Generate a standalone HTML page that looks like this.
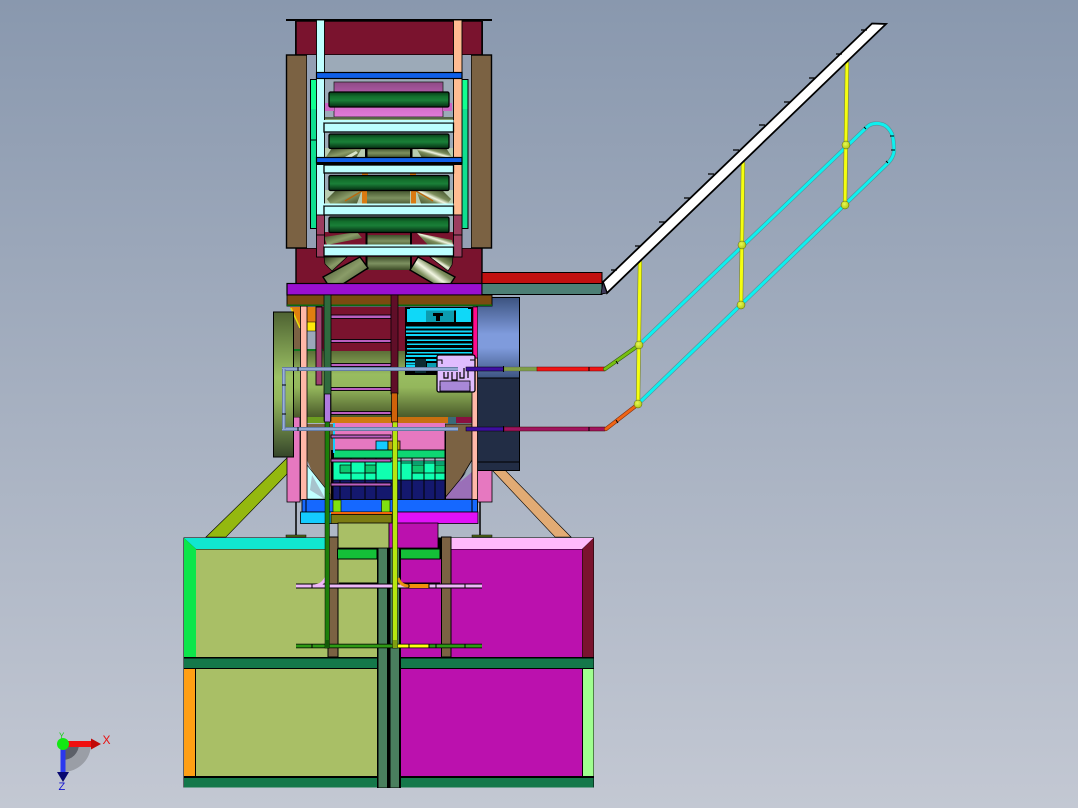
<!DOCTYPE html>
<html><head><meta charset="utf-8"><style>html,body{margin:0;padding:0;width:1078px;height:808px;overflow:hidden;background:#a0aaba}svg{display:block}</style></head><body>
<svg xmlns="http://www.w3.org/2000/svg" width="1078" height="808" viewBox="0 0 1078 808">
<defs>
<linearGradient id="bg" x1="0" y1="0" x2="0" y2="1"><stop offset="0" stop-color="#8998ae"/><stop offset="1" stop-color="#c3c8d3"/></linearGradient>
<linearGradient id="dg" x1="0" y1="0" x2="0" y2="1"><stop offset="0" stop-color="#083a18"/><stop offset=".3" stop-color="#13702d"/><stop offset=".55" stop-color="#1a7f38"/><stop offset="1" stop-color="#052d12"/></linearGradient>
<linearGradient id="pk" x1="0" y1="0" x2="0" y2="1"><stop offset="0" stop-color="#8e4a85"/><stop offset=".6" stop-color="#cc66c4"/><stop offset="1" stop-color="#e07cd8"/></linearGradient>
<linearGradient id="ol" x1="0" y1="0" x2="0" y2="1"><stop offset="0" stop-color="#3f4f2a"/><stop offset=".5" stop-color="#7d9160"/><stop offset="1" stop-color="#3c4a26"/></linearGradient>
<linearGradient id="ang1" x1="0" y1="0" x2="1" y2="1"><stop offset="0" stop-color="#2f3d1c"/><stop offset=".5" stop-color="#8a9c68"/><stop offset="1" stop-color="#2f3d1c"/></linearGradient>
<linearGradient id="ang2" x1="1" y1="0" x2="0" y2="1"><stop offset="0" stop-color="#2f3d1c"/><stop offset=".38" stop-color="#7c8e5c"/><stop offset=".5" stop-color="#f2f6e2"/><stop offset=".62" stop-color="#7c8e5c"/><stop offset="1" stop-color="#2f3d1c"/></linearGradient>
<linearGradient id="cyl" x1="0" y1="0" x2="0" y2="1"><stop offset="0" stop-color="#5c6e38"/><stop offset=".35" stop-color="#98bc60"/><stop offset=".55" stop-color="#94b75c"/><stop offset="1" stop-color="#4a5a2a"/></linearGradient>
<linearGradient id="disc" x1="0" y1="0" x2="0" y2="1"><stop offset="0" stop-color="#4e6232"/><stop offset=".45" stop-color="#9cc264"/><stop offset=".6" stop-color="#94b75c"/><stop offset="1" stop-color="#35452a"/></linearGradient>
<linearGradient id="blue" x1="0" y1="0" x2="0" y2="1"><stop offset="0" stop-color="#3c5380"/><stop offset=".45" stop-color="#7f9bdc"/><stop offset=".62" stop-color="#7f9bdc"/><stop offset="1" stop-color="#3c5380"/></linearGradient>
<linearGradient id="pipe" x1="0" y1="0" x2="0" y2="1"><stop offset="0" stop-color="#4f688f"/><stop offset=".5" stop-color="#a8bce8"/><stop offset="1" stop-color="#4f688f"/></linearGradient>
<linearGradient id="pipev" x1="0" y1="0" x2="1" y2="0"><stop offset="0" stop-color="#4f688f"/><stop offset=".5" stop-color="#a8bce8"/><stop offset="1" stop-color="#4f688f"/></linearGradient>
<radialGradient id="ball" cx=".42" cy=".38" r=".7"><stop offset="0" stop-color="#e8fa50"/><stop offset="1" stop-color="#a8c010"/></radialGradient>
</defs>
<rect width="1078" height="808" fill="url(#bg)"/>

<!-- diagonal legs -->
<polygon points="288,457 288,473 226,537 206,537" fill="#94b80f" stroke="#000" stroke-width=".6"/>
<polygon points="492,470 505,470 571,537 555,537" fill="#e2ab74" stroke="#000" stroke-width=".6"/>

<!-- ===== TOP ===== -->
<rect x="286" y="19" width="206" height="2" fill="#000"/>
<rect x="295" y="20" width="2" height="35" fill="#111"/><rect x="481" y="20" width="2" height="35" fill="#111"/>
<rect x="296" y="21" width="186" height="34" fill="#7a132e" stroke="#000" stroke-width="1.400"/>
<rect x="296" y="248" width="186" height="36" fill="#7a132e" stroke="#000" stroke-width="1.400"/>
<rect x="286.500" y="55" width="20.500" height="193" fill="#7b6243" stroke="#000" stroke-width="1.400"/>
<rect x="471" y="55" width="20.500" height="193" fill="#7b6243" stroke="#000" stroke-width="1.400"/>
<rect x="307" y="55" width="10" height="193" fill="#94a0b4"/><rect x="462" y="55" width="9" height="193" fill="#94a0b4"/>
<rect x="317" y="55" width="145" height="178" fill="#9caab8"/>
<rect x="324" y="232" width="130" height="27" fill="#7a132e"/>

<!-- green side strips -->
<rect x="310.500" y="79.500" width="7" height="149" fill="#0fe090" stroke="#000"/>
<rect x="311" y="80" width="6" height="29" fill="#10ff90"/>
<rect x="462" y="79.500" width="6" height="149" fill="#0fe090" stroke="#000"/>
<rect x="462.500" y="80" width="5" height="29" fill="#10ff90"/>
<line x1="311" y1="140" x2="317" y2="140" stroke="#000"/>

<!-- pink roller -->
<rect x="334" y="82" width="109" height="35" fill="url(#pk)" stroke="#222" stroke-width=".8"/>
<rect x="325" y="103" width="9" height="8" fill="#cc66c4"/><rect x="443" y="103" width="9" height="8" fill="#cc66c4"/>
<rect x="324" y="117" width="129" height="3" fill="#86a070"/>
<line x1="324" y1="118" x2="453" y2="118" stroke="#000" stroke-width=".7"/>

<!-- back olive rollers & angled -->
<rect x="324" y="148" width="130" height="10" fill="#b8ccb0"/>
<rect x="324" y="190" width="130" height="16" fill="#b8ccb0"/>
<rect x="367" y="148" width="43" height="10" fill="url(#ol)"/>
<polygon points="326,157 332,148 362,148 356,158" fill="url(#ang1)"/>
<polygon points="452,157 446,148 416,148 422,158" fill="url(#ang2)"/>
<polygon points="343,158 356,151 358,153 350,158" fill="#d8e4c8"/>
<rect x="365" y="134" width="2.500" height="24" fill="#000"/><rect x="410" y="134" width="2.500" height="24" fill="#000"/>
<rect x="367" y="190" width="43" height="16" fill="url(#ol)"/>
<polygon points="327,199 336,190 362,190 356,206 332,206" fill="url(#ang1)"/>
<polygon points="451,199 442,190 416,190 422,206 446,206" fill="url(#ang2)"/>
<rect x="362" y="190" width="5" height="16" fill="#d97a12"/><rect x="411" y="190" width="5" height="16" fill="#d97a12"/>
<line x1="345" y1="201" x2="362" y2="191" stroke="#b86a10" stroke-width="1.500"/><line x1="416" y1="191" x2="433" y2="201" stroke="#b86a10" stroke-width="1.500"/>
<rect x="362" y="173" width="6" height="3" fill="#d97a12"/><rect x="410" y="173" width="6" height="3" fill="#d97a12"/>
<rect x="367" y="235" width="43" height="12" fill="url(#ol)"/>
<rect x="367" y="257" width="43" height="13" fill="url(#ol)"/>
<rect x="367" y="232" width="43" height="3" fill="#7a132e"/>
<rect x="365.500" y="232" width="2" height="38" fill="#000"/><rect x="410" y="232" width="2" height="38" fill="#000"/>
<polygon points="324,237 357,232 362,238 327,245" fill="url(#ang1)"/>
<polygon points="417,233 452,240 453,245 428,245" fill="url(#ang2)"/>
<polygon points="324,257 347,257 332,271 325,264" fill="url(#ang1)" stroke="#000" stroke-width=".7"/>
<polygon points="430,257 453,257 452,265 448,271" fill="url(#ang2)" stroke="#000" stroke-width=".7"/>
<polygon points="323,277 360,257 368,268 332,291" fill="url(#ang1)" stroke="#000" stroke-width="1.400"/>
<polygon points="455,277 418,257 410,270 446,291" fill="url(#ang2)" stroke="#000" stroke-width="1.400"/>

<!-- dark green rollers -->
<g stroke="#000" stroke-width="1.300">
<rect x="329" y="92" width="120" height="15" rx="1.500" fill="url(#dg)"/>
<rect x="329" y="134" width="120" height="14.500" rx="1.500" fill="url(#dg)"/>
<rect x="329" y="175.500" width="120" height="15" rx="1.500" fill="url(#dg)"/>
<rect x="329" y="217" width="120" height="15.500" rx="1.500" fill="url(#dg)"/>
</g>
<!-- uprights -->
<rect x="316.500" y="20" width="8" height="195" fill="#c0ffff" stroke="#000" stroke-width=".9"/>
<rect x="453.500" y="20" width="8.500" height="195" fill="#ffbc92" stroke="#000" stroke-width=".9"/>
<g fill="#9c3d5f" stroke="#000" stroke-width=".9">
<rect x="316.500" y="215" width="8" height="20"/><rect x="316.500" y="235" width="8" height="22"/>
<rect x="453.500" y="215" width="8.500" height="20"/><rect x="453.500" y="235" width="8.500" height="22"/>
</g>
<!-- light cyan crossbars -->
<g fill="#bcffff" stroke="#000" stroke-width="1.300">
<rect x="324" y="123" width="129.500" height="9"/>
<rect x="324" y="165" width="129.500" height="8"/>
<rect x="324" y="206" width="129.500" height="9"/>
<rect x="324" y="247" width="129.500" height="9"/>
</g>
<rect x="324" y="120" width="129.500" height="2.500" fill="#c0ffff"/>
<rect x="324" y="203.500" width="129.500" height="2" fill="#c0ffff"/>
<rect x="324" y="244.500" width="129.500" height="2" fill="#c0ffff"/>
<!-- blue bars -->
<rect x="316.500" y="72.500" width="145.500" height="6" fill="#0f5fe8" stroke="#000" stroke-width="1.200"/>
<rect x="316.500" y="157.500" width="145.500" height="5.500" fill="#0f5fe8" stroke="#000" stroke-width="1.200"/>
<rect x="316.500" y="162" width="145.500" height="3" fill="#000"/>

<!-- purple + brown deck -->
<rect x="287" y="283.500" width="195" height="11.500" fill="#9a0fd0" stroke="#000" stroke-width="1.200"/>
<rect x="482" y="272.500" width="120" height="11" fill="#c11010" stroke="#000"/>
<rect x="482" y="283.500" width="120" height="11" fill="#4d7f75" stroke="#000"/>

<!-- ===== MIDDLE ===== -->
<rect x="287" y="417" width="13" height="85" fill="#e678c0" stroke="#000" stroke-width=".8"/>
<rect x="477" y="417" width="15" height="85" fill="#e678c0" stroke="#000" stroke-width=".8"/>
<rect x="293" y="307" width="8" height="44" fill="#7b6243"/>
<rect x="307" y="307" width="9" height="44" fill="#9ca8ba"/>
<polygon points="290,307 300,307 300,327" fill="#e07f10"/>
<line x1="291" y1="308" x2="300" y2="328" stroke="#e8e010" stroke-width="1.500"/>
<rect x="307" y="307" width="8.500" height="15" fill="#e07f10"/><rect x="307" y="322" width="8.500" height="9" fill="#ffe80a" stroke="#000" stroke-width=".5"/>
<rect x="322" y="307" width="9" height="44" fill="#7a132e"/>
<rect x="331" y="307" width="60" height="44" fill="#7a132e"/>
<rect x="398" y="307" width="12" height="44" fill="#7a132e"/>
<rect x="293" y="349" width="30" height="2" fill="#0e7a20"/>
<!-- right disc -->
<rect x="477" y="297.500" width="42.500" height="81" fill="url(#blue)" stroke="#000" stroke-width="1"/>
<rect x="477" y="378" width="42.500" height="92.500" fill="#222d45" stroke="#000" stroke-width="1"/>
<line x1="477" y1="462" x2="519" y2="462" stroke="#000"/>
<!-- main cylinder -->
<rect x="293" y="351" width="179" height="66" fill="url(#cyl)"/>
<rect x="316" y="307" width="6" height="78" fill="#a04070" stroke="#000" stroke-width=".9"/>
<rect x="273.500" y="312" width="20" height="145" fill="url(#disc)" stroke="#000"/>
<!-- brown bowls -->
<path d="M307 424 H333 V500 H326 L315 478 L307 460Z" fill="#7b6243"/>
<path d="M445 424 H472 V460 L460 480 L445 498Z" fill="#7b6243" stroke="#000" stroke-width=".8"/>
<polygon points="307,465 330,494 330,499 307,499" fill="#bfffff" stroke="#000" stroke-width=".6"/>
<polygon points="472,465 472,499 444,499" fill="#9a6fb8" stroke="#000" stroke-width=".6"/>
<polygon points="312,475 326,500 310,490" fill="#9caab8" opacity=".7"/>
<polygon points="472,462 472,472 460,482" fill="#9caab8"/>
<!-- pink & panels -->
<rect x="333" y="420" width="112" height="31" fill="#e678c0"/>
<rect x="307" y="417" width="165" height="6" fill="#c86f10"/>
<rect x="448" y="417" width="9" height="7" fill="#3a6a78"/><rect x="456" y="417" width="16" height="6" fill="#8a1040"/>
<rect x="307" y="417" width="18" height="6" fill="#6c9c20"/>
<rect x="376" y="441" width="12" height="9" fill="#14ccff" stroke="#000" stroke-width=".8"/>
<rect x="388" y="441" width="12" height="9" fill="#bfa010" stroke="#000" stroke-width=".8"/>
<rect x="333.500" y="450" width="111.500" height="8" fill="#0fd673" stroke="#000" stroke-width=".9"/>
<rect x="333" y="461" width="112" height="20" fill="#10ffb0" stroke="#000" stroke-width=".8"/>
<rect x="333" y="480" width="112" height="20" fill="#14186e" stroke="#000" stroke-width=".8"/>
<g fill="#0dc870" stroke="#000" stroke-width=".7">
<rect x="340" y="465" width="11" height="8"/><rect x="365" y="465" width="11" height="8"/><rect x="412" y="465" width="12" height="8"/><rect x="435" y="465" width="10" height="8"/>
</g>
<g stroke="#000" stroke-width="1"><path d="M351 458V500M365 458V500M376 458V500M401 458V500M412 458V500M424 458V500M435 458V500M340 480V500"/></g>
<path d="M401 463H445M340 473H376M412 473H445" stroke="#000" stroke-width=".7"/>
<rect x="331" y="450" width="2.500" height="50" fill="#000"/>
<rect x="444.500" y="430" width="1.500" height="70" fill="#000"/>
<rect x="333" y="423" width="2" height="30" fill="#14ccff"/>
<!-- purple rungs -->
<g fill="#bb5fc0" stroke="#000" stroke-width=".9">
<rect x="331" y="315" width="60" height="3.500"/><rect x="331" y="339.500" width="60" height="3"/><rect x="331" y="363.500" width="60" height="3"/>
<rect x="331" y="387.500" width="60" height="3"/><rect x="331" y="411.500" width="60" height="3"/><rect x="331" y="435" width="60" height="3"/>
<rect x="331" y="459" width="60" height="3"/><rect x="331" y="483" width="60" height="3"/>
</g>
<rect x="331" y="417" width="60" height="6" fill="#d07a10"/>
<!-- motor -->
<rect x="405" y="307" width="68" height="16" fill="#000"/>
<rect x="407" y="309" width="13" height="13" fill="#0fd8f8"/>
<rect x="426" y="310" width="28" height="12" fill="#0c9cb0"/>
<rect x="456" y="309" width="15" height="13" fill="#0fd8f8"/>
<rect x="420" y="309" width="6" height="13" fill="#0fd8f8"/>
<rect x="410" y="308" width="58" height="2.500" fill="#0fd8f8"/>
<rect x="433" y="313" width="10" height="3" fill="#000"/><rect x="436" y="316" width="4" height="5" fill="#000"/>
<rect x="405" y="323" width="68" height="52" fill="#000"/>
<g fill="#0fd8f8">
<rect x="406" y="326.500" width="66" height="2"/><rect x="406" y="330.500" width="66" height="2"/><rect x="406" y="334" width="66" height="2"/>
<rect x="407" y="339.500" width="65" height="1.500"/><rect x="407" y="343.500" width="65" height="1.500"/><rect x="407" y="348" width="65" height="1.500"/><rect x="407" y="352" width="65" height="1.500"/>
<rect x="406" y="355" width="32" height="2"/><rect x="406" y="359" width="32" height="2"/><rect x="406" y="362.500" width="10" height="2"/>
<rect x="406" y="365" width="9" height="6"/><rect x="427" y="363" width="12" height="8" fill="#0c9cb0"/>
</g>
<rect x="415" y="359" width="11" height="14" fill="#0a2a30"/>
<!-- peach posts + magenta -->
<rect x="300.500" y="306" width="6.500" height="194" fill="#ffb8a8" stroke="#000" stroke-width=".8"/>
<rect x="472" y="358" width="5.500" height="142" fill="#ffb8a8" stroke="#000" stroke-width=".8"/>
<rect x="473" y="307" width="4.500" height="51" fill="#ff0a8c" stroke="#000" stroke-width=".6"/>
<rect x="437" y="355" width="38" height="37" rx="2" fill="#e0bcff" stroke="#000" stroke-width="1.300"/>
<rect x="440" y="381" width="30" height="10" fill="#a888d8" stroke="#000" stroke-width=".8"/>
<path d="M444 372v6h4v-6M452 372v8h5v-8M460 372v6h4v-10M468 368v10" stroke="#000" stroke-width="1.200" fill="none"/>
<path d="M437 360h5v4M470 360h5M440 392v-6M470 392v-6" stroke="#000" fill="none"/>
<!-- bottom blue -->
<rect x="302" y="499.500" width="175.500" height="12.500" fill="#1568ff" stroke="#000" stroke-width=".9"/>
<path d="M306 500v12M472 500v12" stroke="#000"/>
<rect x="333" y="500" width="8" height="12" fill="#7fe010" stroke="#000" stroke-width=".6"/>
<rect x="381.500" y="500" width="8.500" height="12" fill="#7fe010" stroke="#000" stroke-width=".6"/>
<rect x="300.500" y="512" width="31" height="11.500" fill="#14ccff" stroke="#000" stroke-width=".8"/>
<rect x="392" y="512" width="86" height="11.500" fill="#e011f7" stroke="#000" stroke-width=".8"/>
<rect x="331" y="512" width="61" height="2.500" fill="#f0640a"/>
<rect x="331" y="514.500" width="61" height="9" fill="#7c7c12" stroke="#000" stroke-width=".8"/>
<!-- small feet -->
<path d="M296 502v35M480 502v35" stroke="#000" stroke-width="1.500"/>
<rect x="286" y="535" width="20" height="2" fill="#57701a" stroke="#000" stroke-width=".5"/>
<rect x="472" y="535" width="20" height="2" fill="#57701a" stroke="#000" stroke-width=".5"/>

<!-- brown deck on top -->
<rect x="287" y="295" width="205" height="11" fill="#7b4b10" stroke="#000" stroke-width=".9"/>
<rect x="287" y="304.500" width="205" height="1.500" fill="#0a6a10"/>

<!-- ===== BOX ===== -->
<rect x="183.500" y="537.500" width="410.500" height="250" fill="#000"/>
<polygon points="184,538 328,538 328,549 196,549" fill="#11e6d0"/>
<polygon points="184,538 196,549 196,657 184,657" fill="#0de64a"/>
<rect x="196" y="549.500" width="132" height="107.500" fill="#a9bf66"/>
<rect x="337" y="558" width="41" height="99" fill="#a9bf66"/>
<polygon points="450,538 593.500,538 582,549 450,549" fill="#ffbafb"/>
<polygon points="593.500,538 593.500,657 582.500,657 582.500,549" fill="#7a132e"/>
<rect x="451" y="549.500" width="131" height="107.500" fill="#bb11ae"/>
<rect x="401" y="559" width="41" height="98" fill="#bb11ae"/>
<rect x="184" y="658.500" width="193" height="9.500" fill="#14784a"/>
<rect x="401" y="658.500" width="192.500" height="9.500" fill="#14784a"/>
<rect x="184" y="669" width="11" height="107" fill="#ff9f14"/>
<rect x="196" y="669" width="181" height="107" fill="#a9bf66"/>
<rect x="401" y="669" width="181" height="107" fill="#bb11ae"/>
<rect x="583" y="669" width="10.500" height="107" fill="#a0ff90"/>
<rect x="184" y="778" width="193" height="9.500" fill="#14784a"/>
<rect x="401" y="778" width="192.500" height="9.500" fill="#14784a"/>
<!-- centre neck -->
<rect x="338" y="523" width="51" height="25" fill="#a9bf66" stroke="#000" stroke-width=".8"/>
<rect x="389" y="523" width="49" height="25" fill="#bb11ae" stroke="#000" stroke-width=".8"/>
<rect x="328" y="537" width="10" height="120" fill="#7b6243" stroke="#000" stroke-width="1"/>
<rect x="441.500" y="537" width="9.500" height="120" fill="#7b6243" stroke="#000" stroke-width="1"/>
<rect x="337.500" y="549" width="39.500" height="10" fill="#14c038" stroke="#000" stroke-width="1"/>
<rect x="400.500" y="549" width="39.500" height="10" fill="#14c038" stroke="#000" stroke-width="1"/>
<line x1="339" y1="583" x2="377" y2="583" stroke="#000"/><line x1="401" y1="583" x2="440" y2="583" stroke="#000"/>
<rect x="377" y="548" width="24" height="240" fill="#000"/>
<rect x="378.500" y="548.500" width="8.500" height="239" fill="#4a7f5e"/>
<rect x="390.500" y="548.500" width="8.500" height="239" fill="#4a7f5e"/>
<!-- horizontal lower pipes -->
<g>
<path d="M296 586H482" stroke="#000" stroke-width="5"/>
<path d="M296 586H482" stroke="#eeb8f8" stroke-width="3"/>
<rect x="409" y="584" width="20" height="4" fill="#f0900a"/>
<path d="M312 586c8 0 11-3 14-8" fill="none" stroke="#eeb8f8" stroke-width="3"/>
<path d="M398 578c2 6 6 8 11 8" fill="none" stroke="#e89010" stroke-width="3"/>
<path d="M296 646H482" stroke="#000" stroke-width="4.500"/>
<path d="M296 646H482" stroke="#2e9a14" stroke-width="3"/>
<rect x="398" y="644.500" width="31" height="3" fill="#ffff10"/>
<path d="M312 584.500v3M409 584.500v3M429 584v4M436 584.500v3M465 584.500v3M312 644.500v3M409 644.500v3M429 644v4M436 644.500v3M465 644.500v3" stroke="#000"/>
</g>
<!-- vertical long pipes -->
<rect x="324" y="295" width="7" height="126" fill="#2f6a3e" stroke="#000" stroke-width=".7"/>
<rect x="324.500" y="394" width="6" height="28" fill="#b07ae0" stroke="#000" stroke-width=".7"/>
<rect x="325" y="422" width="4.500" height="226" fill="#1c7f0a" stroke="#000" stroke-width=".5"/>
<rect x="391" y="295" width="7" height="99" fill="#600e28" stroke="#000" stroke-width=".7"/>
<rect x="391.500" y="393" width="6" height="29" fill="#d0620a" stroke="#000" stroke-width=".7"/>
<rect x="392.500" y="422" width="5" height="226" fill="#b7e60f" stroke="#000" stroke-width=".5"/>
<rect x="325" y="640" width="4.500" height="8" fill="#145a08"/><rect x="393" y="640" width="4.500" height="8" fill="#7f9f10"/>

<!-- horizontal upper pipes -->
<rect x="282" y="367" width="176" height="4" fill="url(#pipe)"/>
<rect x="282" y="427" width="176" height="4" fill="url(#pipe)"/>
<rect x="282" y="369" width="3.500" height="60" fill="url(#pipev)"/>
<path d="M298 367v4M298 427v4M282 385h4M282 414h4" stroke="#000"/>
<rect x="466" y="367" width="38" height="4" fill="#3e0fa0" stroke="#000" stroke-width=".5"/>
<rect x="504" y="367" width="33" height="4" fill="#7f9f45" stroke="#555" stroke-width=".4"/>
<rect x="537" y="367" width="68" height="4" fill="#f01414" stroke="#600" stroke-width=".5"/>
<rect x="466" y="427" width="38" height="4" fill="#3e0fa0" stroke="#000" stroke-width=".5"/>
<rect x="504" y="427" width="101" height="4" fill="#a0145f" stroke="#400" stroke-width=".5"/>
<path d="M503.500 366v6M503.500 426v6M589 367v4M589 427v4" stroke="#000"/>

<!-- ===== HANDRAIL ===== -->
<g fill="none" stroke-linecap="round">
<path d="M639 345L867 127c4-4 10-4 14-3c6 1 9 6 11 10c2 6 2 14 2 18c-1 5-3 8-6 11L638 404" stroke="#5a8e96" stroke-width="4.200"/>
<path d="M639 345L867 127c4-4 10-4 14-3c6 1 9 6 11 10c2 6 2 14 2 18c-1 5-3 8-6 11L638 404" stroke="#0ef0ef" stroke-width="3"/>
<path d="M640 262L638 404M743 163L741 305M847 63L845 205" stroke="#7a8620" stroke-width="4.200"/>
<path d="M640 262L638 404M743 163L741 305M847 63L845 205" stroke="#f5ff10" stroke-width="3"/>
<path d="M605 369L639 345" stroke="#3a5a10" stroke-width="4"/>
<path d="M605 369L639 345" stroke="#76c010" stroke-width="2.800"/>
<path d="M606 429L637 405" stroke="#803010" stroke-width="4"/>
<path d="M606 429L637 405" stroke="#f06414" stroke-width="2.800"/>
</g>
<path d="M616 361l2 3M616 420l2 3M866 129l-2-2M890 136h4M891 150h4M888 163l-2-2" stroke="#000"/>
<g fill="url(#ball)" stroke="#556010" stroke-width=".5">
<circle cx="639" cy="345" r="4"/><circle cx="638" cy="404" r="4"/><circle cx="742" cy="245" r="4"/><circle cx="741" cy="305" r="4"/><circle cx="846" cy="145" r="4"/><circle cx="845" cy="205" r="4"/>
</g>
<polygon points="603,282 872,23.500 886,24 607,293" fill="#fff" stroke="#000" stroke-width="1.800"/>
<polygon points="603,282 607,293 601,294" fill="#403a5a" stroke="#000" stroke-width=".8"/>
<path d="M611 270h6M635 246h6M659 222h6M684 198h6M708 174h6M733 150h6M759 125h6M784 102h6M809 78h6M836 54h6M861 30h6" stroke="#000" stroke-width="1.300"/>

<!-- ===== TRIAD ===== -->
<path d="M63 744H91A28 28 0 0 1 63 772Z" fill="#9a9ea6"/>
<path d="M63 744H79A16 16 0 0 1 63 760Z" fill="#5c6068"/>
<rect x="65" y="741" width="27" height="6" fill="#f01010"/>
<polygon points="91,738.500 101,744 91,749.500" fill="#c00808"/>
<rect x="60.500" y="746" width="5" height="26" fill="#2a38ee"/>
<polygon points="57,772 69,772 63,782" fill="#080870"/>
<circle cx="63" cy="744" r="6" fill="#12e812"/>
<text x="102.500" y="744" font-family="Liberation Sans, sans-serif" font-size="12" fill="#e81010">X</text>
<text x="58.500" y="790" font-family="Liberation Sans, sans-serif" font-size="11" fill="#1010d0">Z</text>
<text x="59" y="738.500" font-family="Liberation Sans, sans-serif" font-size="8" fill="#10d010">Y</text>
</svg>
</body></html>
